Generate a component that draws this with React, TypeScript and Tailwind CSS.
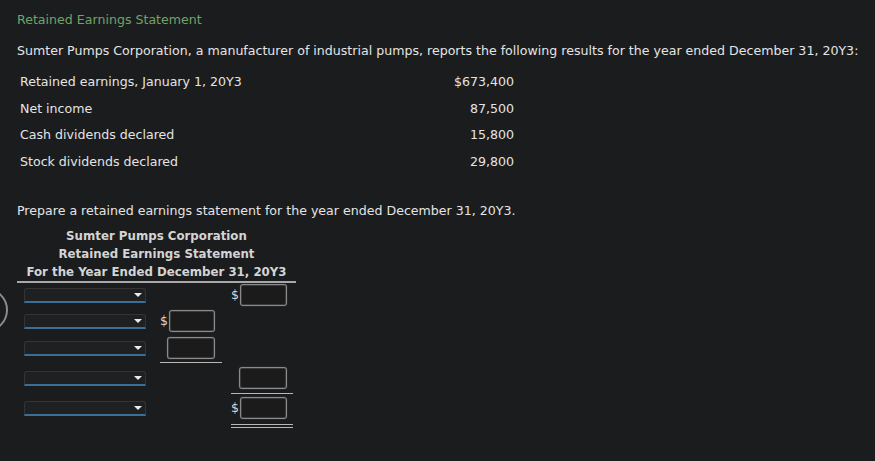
import React from "react";

function Dropdown() {
  return (
    <div className="relative w-[122px] h-[15px] bg-[#1f2022] border-t border-x border-[#333436] border-b-2 border-b-[#3b6f98] rounded-t-[3px]">
      <div className="absolute right-[3px] top-[4px] w-0 h-0 border-l-[4px] border-r-[4px] border-t-[4px] border-l-transparent border-r-transparent border-t-[#ececec]" />
    </div>
  );
}

function Box({ dollar, pr }: { dollar?: boolean; pr: string }) {
  return (
    <div className={`flex items-center justify-end h-[22px] ${pr}`}>
      {dollar && <span className="text-[12.5px] text-[#d8d8d8] mr-[1px]">$</span>}
      <div className="w-[48px] h-[22px] rounded-[3px] border border-[#8a8a8a] bg-[#1b1b1c] shadow-[inset_0_0_0_1px_#3a3a3a,0_0_1px_#777]" />
    </div>
  );
}

function Line() {
  return <div className="h-px bg-[#b8b8b8]" />;
}

export default function App() {
  const items = [
    ["Retained earnings, January 1, 20Y3", "$673,400"],
    ["Net income", "87,500"],
    ["Cash dividends declared", "15,800"],
    ["Stock dividends declared", "29,800"],
  ];
  const mts = ["mt-[15px]", "mt-[11px]", "mt-[10px]", "mt-[11px]"];
  return (
    <div
      className="relative w-[875px] h-[461px] overflow-hidden bg-[#1b1c1e] text-[#e4e4e4] text-[12.6px]"
      style={{ fontFamily: '"DejaVu Sans", Verdana, sans-serif' }}
    >
      <div className="absolute left-[-36px] top-[288px] w-[44px] h-[44px] rounded-full border-2 border-[#8c8c8c]" />
      <div className="pl-[17px] pt-[12px]">
        <div className="leading-[16px] text-[#6fa367]">Retained Earnings Statement</div>
        <div className="leading-[16px] mt-[15px]">
          Sumter Pumps Corporation, a manufacturer of industrial pumps, reports the following results for the year ended December 31, 20Y3:
        </div>
        <div className="pl-[3px]">
          {items.map(([l, v], i) => (
            <div key={l} className={`flex leading-[16px] ${mts[i]}`}>
              <div className="w-[400px]">{l}</div>
              <div className="w-[94px] text-right">{v}</div>
            </div>
          ))}
        </div>
        <div className="leading-[16px] mt-[33px]">
          Prepare a retained earnings statement for the year ended December 31, 20Y3.
        </div>
        <div className="w-[279px] mt-[8px]">
          <div className="border-b-2 border-[#a8a8a8] text-center font-bold leading-[18px] text-[11.8px] text-[#d4d4d4]">
            <div>Sumter Pumps Corporation</div>
            <div>Retained Earnings Statement</div>
            <div>For the Year Ended December 31, 20Y3</div>
          </div>

          {/* Row 1 */}
          <div className="flex items-start mt-[1px]">
            <div className="h-[22px] flex items-center ml-[7px]"><Dropdown /></div>
            <div className="w-[62px] ml-[14px]" />
            <div className="w-[62px] ml-[9px]"><Box dollar pr="pr-[6px]" /></div>
          </div>
          {/* Row 2 */}
          <div className="flex items-start mt-[4px]">
            <div className="h-[22px] flex items-center ml-[7px]"><Dropdown /></div>
            <div className="w-[62px] ml-[14px]"><Box dollar pr="pr-[7px]" /></div>
            <div className="w-[62px] ml-[9px]" />
          </div>
          {/* Row 3 */}
          <div className="flex items-start mt-[5px]">
            <div className="h-[22px] flex items-center ml-[7px]"><Dropdown /></div>
            <div className="w-[62px] ml-[14px]">
              <Box pr="pr-[7px]" />
              <div className="mt-[3px]"><Line /></div>
            </div>
            <div className="w-[62px] ml-[9px]" />
          </div>
          {/* Row 4 */}
          <div className="flex items-start mt-[4px]">
            <div className="h-[22px] flex items-center ml-[7px]"><Dropdown /></div>
            <div className="w-[62px] ml-[14px]" />
            <div className="w-[62px] ml-[9px]">
              <Box pr="pr-[6px]" />
              <div className="mt-[4px]"><Line /></div>
            </div>
          </div>
          {/* Row 5 */}
          <div className="flex items-start mt-[3px]">
            <div className="h-[22px] flex items-center ml-[7px]"><Dropdown /></div>
            <div className="w-[62px] ml-[14px]" />
            <div className="w-[62px] ml-[9px]">
              <Box dollar pr="pr-[6px]" />
              <div className="mt-[5px]"><Line /></div>
              <div className="mt-[2px]"><Line /></div>
            </div>
          </div>
        </div>
      </div>
    </div>
  );
}
